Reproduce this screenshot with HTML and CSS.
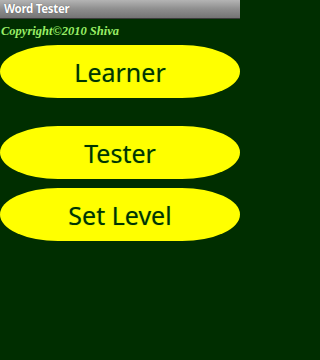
FILE: index.html
```html
<!DOCTYPE html>
<html>
<head>
<meta charset="utf-8">
<title>Word Tester</title>
<link rel="stylesheet" href="styles.css">
</head>
<body>
<div class="screen">
  <div class="titlebar">Word Tester</div>
  <div class="copyright">Copyright©2010 Shiva</div>
  <div class="menu">
    <div class="btn btn-learner">Learner</div>
    <div class="btn btn-tester">Tester</div>
    <div class="btn btn-level">Set Level</div>
  </div>
</div>
</body>
</html>
```
FILE: styles.css
```css
html, body {
  margin: 0;
  padding: 0;
  background: #002e00;
}
.screen {
  width: 240px;
  height: 360px;
  display: flex;
  flex-direction: column;
  background: #002e00;
  overflow: hidden;
}
.titlebar {
  height: 18px;
  line-height: 17px;
  padding-left: 4px;
  background: linear-gradient(#b4b4b4, #8e8e8e 50%, #747474);
  border-bottom: 1px solid #3a3a3a;
  color: #ffffff;
  font-family: "Noto Sans", "Open Sans", sans-serif;
  font-weight: bold;
  font-size: 11.5px;
  letter-spacing: -0.3px;
  text-shadow: 0 0 1px rgba(0,0,0,0.5);
}
.copyright {
  height: 20px;
  line-height: 20px;
  padding-left: 1px;
  margin-top: 2px;
  color: #99ee66;
  font-family: "Liberation Serif", "DejaVu Serif", serif;
  font-style: italic;
  font-weight: bold;
  font-size: 12.5px;
}
.menu {
  display: flex;
  flex-direction: column;
  margin-top: 4px;
}
.btn {
  height: 53px;
  width: 240px;
  display: flex;
  align-items: center;
  justify-content: center;
  background: #ffff00;
  border-radius: 58px / 50%;
  color: #003300;
  font-family: "Noto Sans", "Open Sans", sans-serif;
  font-size: 25px;
  text-shadow: 0 0 1px #88cc22;
}
.btn-tester {
  margin-top: 28px;
}
.btn-level {
  margin-top: 9px;
}
```
